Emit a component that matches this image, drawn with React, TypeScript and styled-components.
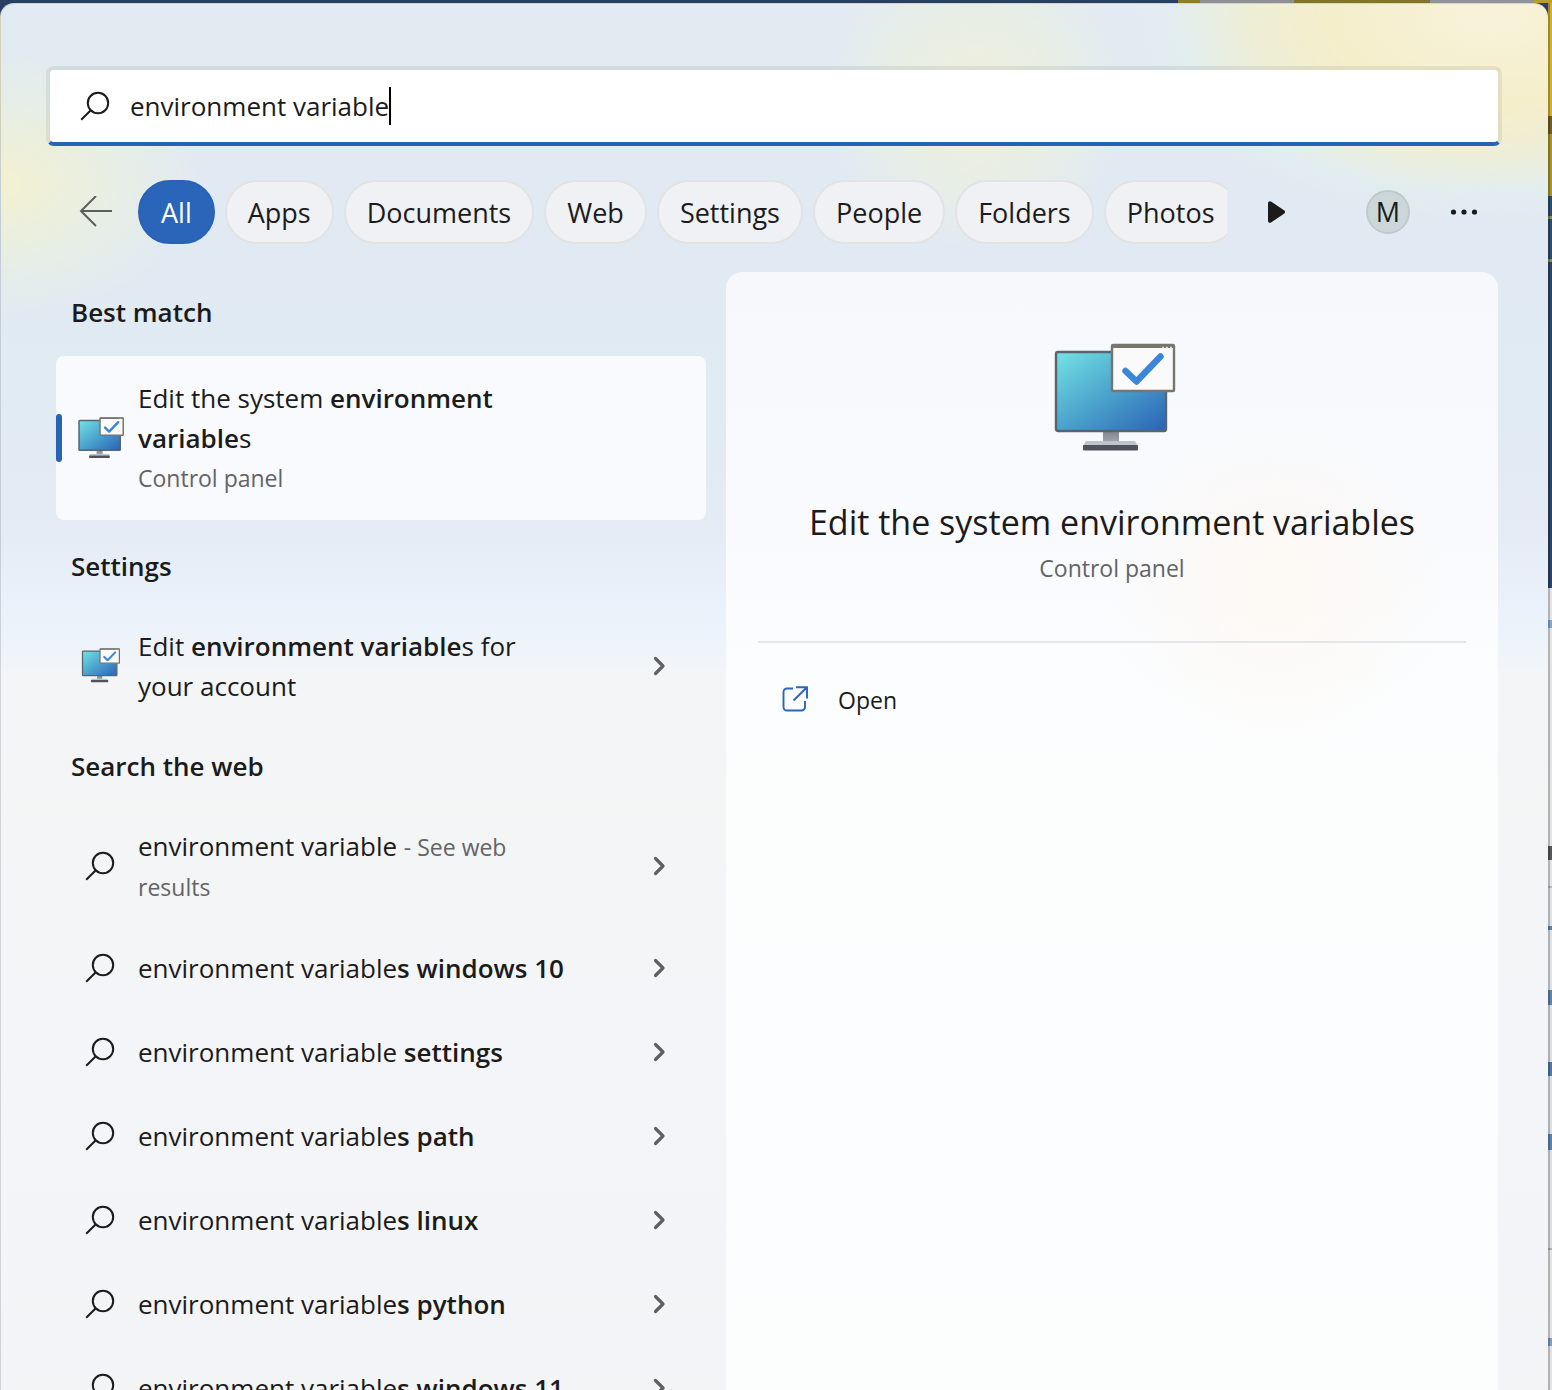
import React, { useState } from "react";
import styled, { createGlobalStyle } from "styled-components";

const GlobalStyle = createGlobalStyle`
  *, *::before, *::after { box-sizing: border-box; }
  body {
    margin: 0;
    font-family: "Segoe UI", "Open Sans", "Noto Sans", sans-serif;
    font-size: 26px;
    color: #1b1b1b;
    -webkit-font-smoothing: antialiased;
  }
  h1, h2, p, ul { margin: 0; padding: 0; }
  button, input { font: inherit; color: inherit; }
  button { border: 0; background: none; padding: 0; }
`;

const Desktop = styled.div`
  height: 100vh;
  overflow: hidden;
  padding: 3px 4px 0 0;
  background:
    linear-gradient(90deg, #27405f 0 1178px, #8f7d28 1178px 1200px, #8e9094 1200px 1294px, #84732a 1294px 1430px, #90939a 1430px 1534px, #b89f2c 1534px) top / 100% 3px no-repeat,
    linear-gradient(90deg, rgba(0, 0, 0, 0.22) 50%, transparent 50%) right / 4px 100% no-repeat,
    linear-gradient(180deg, #d0b030 0 116px, #6b5f24 116px 134px, #a8932f 134px 196px, #2c4c70 196px 216px, #8e8c56 216px 219px, #2c4c70 219px 259px, #8e8c56 259px 262px, #2a4566 262px 588px,
      #e4e4e4 588px 620px, #86a8d2 620px 628px, #e4e4e4 628px 846px, #55585c 846px 860px, #e4e4e4 860px 886px, #b8b8b8 886px 888px,
      #e0e2e6 888px 926px, #5f83ac 926px 930px, #e0e2e6 930px 990px, #5f83ac 990px 1005px, #dcdfe3 1005px 1062px, #4f78a6 1062px 1076px, #dcdfe3 1076px 1134px, #5f83ac 1134px 1150px,
      #dcdfe3 1150px 1248px, #b0b0b0 1248px 1250px, #e4e4e4 1250px 1338px, #7f9fc8 1338px 1346px, #e4e4e4 1346px) right / 4px 100% no-repeat,
    #27405f;
`;

const Window = styled.main`
  height: 100%;
  overflow: hidden;
  display: flex;
  flex-direction: column;
  padding: 62px 46px 0 45px;
  border: 1px solid rgba(130, 140, 150, 0.3);
  border-width: 1px 0 0 1px;
  border-radius: 14px 14px 0 0;
  background:
    radial-gradient(ellipse 200px 130px at 0 180px, rgba(243, 241, 206, 0.95), rgba(236, 241, 218, 0.6) 55%, rgba(222, 240, 242, 0) 100%),
    radial-gradient(ellipse 360px 205px at 1490px 10px, #f8f2da 0, #f5eecb 45%, rgba(240, 239, 208, 0.8) 68%, rgba(226, 241, 236, 0.4) 88%, rgba(224, 240, 241, 0) 100%),
    radial-gradient(ellipse 150px 150px at 975px 95px, rgba(241, 239, 218, 0.95), rgba(236, 240, 222, 0.65) 55%, rgba(224, 238, 242, 0) 100%),
    linear-gradient(180deg, #e2ebf1 0, #e1eaf3 260px, #e0ebf3 400px, #e4ebf4 520px, #eaf2fb 612px, #f3f5f7 670px, #f4f5f5 800px, #f3f5f8 1050px, #f3f4f6 100%);
`;

const SearchBox = styled.label`
  flex: none;
  display: flex;
  align-items: center;
  height: 80px;
  padding: 0 28px 0 30px;
  border: 4px solid rgba(70, 90, 80, 0.1);
  border-bottom-color: #2863b8;
  border-radius: 8px;
  background: #fff padding-box;
`;

const SearchInput = styled.input`
  field-sizing: content;
  height: 40px;
  margin-left: 20px;
  padding: 0;
  border: 0;
  outline: 0;
  background: none;
  caret-color: transparent;
`;

const Caret = styled.span`
  width: 2px;
  height: 38px;
  background: #000;
`;

const FilterRow = styled.nav`
  flex: none;
  display: flex;
  align-items: center;
  margin-top: 34px;
  padding: 0 24px 0 33px;
`;

const IconButton = styled.button`
  flex: none;
  display: grid;
  place-items: center;
  height: 44px;
`;

const Chips = styled.div`
  flex: 1;
  min-width: 0;
  display: flex;
  gap: 10px;
  margin-left: 25px;
  overflow: hidden;
`;

const Chip = styled.button<{ $active?: boolean }>`
  flex: none;
  height: 64px;
  padding: 0 21px;
  border-radius: 32px;
  border: 2px solid ${(p) => (p.$active ? "#2863b8" : "#e1e3e5")};
  background: ${(p) => (p.$active ? "#2a65ba" : "#eff1f4")};
  color: ${(p) => (p.$active ? "#fff" : "#1b1b1b")};
  font-size: 27px;
`;

const RowTools = styled.div`
  flex: none;
  display: flex;
  align-items: center;
  margin-left: 40px;
`;

const Avatar = styled.button`
  width: 44px;
  height: 44px;
  margin: 0 40px 0 79px;
  border: 2px solid #bfcacd;
  border-radius: 50%;
  background: #ccd7da;
  font-size: 27px;
  line-height: 40px;
`;

const Content = styled.div`
  flex: 1;
  min-height: 0;
  display: grid;
  grid-template-columns: 650fr 772fr;
  gap: 20px;
  margin-top: 28px;
  padding: 0 4px 0 10px;
`;

const Results = styled.div`
  min-width: 0;
  overflow: hidden;
`;

const GroupTitle = styled.h2`
  padding-left: 15px;
  font-size: 26px;
  line-height: 80px;
  font-weight: 600;
`;

const ResultRow = styled.button<{ $selected?: boolean }>`
  position: relative;
  display: flex;
  align-items: center;
  width: 100%;
  min-height: 84px;
  padding: ${(p) => (p.$selected ? 22 : 20)}px 0 ${(p) => (p.$selected ? 22 : 20)}px 20px;
  margin: ${(p) => (p.$selected ? "4px 0 6px" : "0")};
  border-radius: 8px;
  background: ${(p) => (p.$selected ? "#f8fafd" : "transparent")};
  text-align: left;
  line-height: 40px;
`;

const SelectedMark = styled.span`
  position: absolute;
  left: 0;
  top: 50%;
  width: 6px;
  height: 48px;
  margin-top: -24px;
  border-radius: 3px;
  background: #2863b8;
`;

const IconSlot = styled.span`
  flex: none;
  display: grid;
  place-items: center;
  width: 48px;
  margin-right: 14px;
`;

const ResultText = styled.span`
  flex: 1;
  padding-right: 44px;
  b { font-weight: 600; }
`;

const Muted = styled.span<{ $block?: boolean }>`
  display: ${(p) => (p.$block ? "block" : "inline")};
  font-size: 23px;
  line-height: ${(p) => (p.$block ? "40px" : "30px")};
  color: #636466;
`;

const ChevronSlot = styled.span`
  flex: none;
  display: grid;
  place-items: center;
  width: 94px;
`;

const Preview = styled.section`
  display: flex;
  flex-direction: column;
  align-items: stretch;
  padding: 71px 32px 0;
  border-radius: 16px 16px 0 0;
  background:
    radial-gradient(ellipse 170px 170px at 550px 310px, rgba(255, 247, 238, 0.65), rgba(255, 249, 242, 0) 100%),
    linear-gradient(180deg, #f6f8fb 0, #f9fafd 250px, #fbfcfe 370px, #fcfdfd 500px, #fcfdfe 900px, #fcfdfd 100%);
`;

const PreviewHead = styled.header`
  display: flex;
  flex-direction: column;
  align-items: center;
  padding-bottom: 51px;
  border-bottom: 2px solid #e5e6e8;
`;

const PreviewTitle = styled.h1`
  margin-top: 41px;
  font-size: 34px;
  line-height: 48px;
  font-weight: 400;
`;

const PreviewKind = styled.p`
  font-size: 23px;
  line-height: 44px;
  color: #636466;
`;

const ActionRow = styled.button`
  display: flex;
  align-items: center;
  gap: 28px;
  height: 80px;
  margin-top: 17px;
  padding-left: 24px;
  font-size: 23px;
`;

const SearchIcon = () => (
  <svg width="30" height="30" viewBox="0 0 30 30" fill="none" stroke="#1b1b1b" strokeWidth="2" aria-hidden="true">
    <circle cx="18" cy="12" r="10.2" />
    <path d="M10.8 19.2 1.2 28.8" />
  </svg>
);

const Chevron = () => (
  <svg width="14" height="20" viewBox="0 0 14 20" fill="none" stroke="#5f6062" strokeWidth="3.2" strokeLinecap="round" strokeLinejoin="round" aria-hidden="true">
    <path d="M3.500 2.500 11 10 3.500 17.500" />
  </svg>
);

const MonitorIcon = ({ id, width }: { id: string; width: number }) => {
  const outline = width < 60 ? 4 : 2.4;
  return (
    <svg width={width} height={Math.round((width * 114) / 128)} viewBox="-6 0 128 114" aria-hidden="true">
      <defs>
        <linearGradient id={`${id}-screen`} x1="0" y1="0" x2="1" y2="1">
          <stop offset="0" stopColor="#74e3e4" />
          <stop offset="0.5" stopColor="#4ba3cd" />
          <stop offset="1" stopColor="#2a62b6" />
        </linearGradient>
        <linearGradient id={`${id}-stand`} x1="0" y1="0" x2="0" y2="1">
          <stop offset="0" stopColor="#80858c" />
          <stop offset="1" stopColor="#a5abb3" />
        </linearGradient>
      </defs>
      <rect x="49" y="88" width="16" height="13" fill={`url(#${id}-stand)`} />
      <path d="M32 98h49l3 5H29z" fill="#bcc5cc" />
      <rect x="29" y="102" width="55" height={outline + 3} rx="1" fill="#50545a" />
      <rect x="2" y="9" width="110" height="79" rx="2" fill={`url(#${id}-screen)`} stroke="#566570" strokeWidth={outline} />
      <rect x="58" y="2" width="62" height="46" rx="1" fill="#fafafa" stroke="#77756f" strokeWidth={outline} />
      <path d="M58 3h62" stroke="#77756f" strokeWidth="4" />
      <path d="M108 4.500h2M112 4.500h2M116 4.500h2" stroke="#d6d6d4" strokeWidth="1.500" />
      <path d="m71.500 28 11 10.500 24-25" fill="none" stroke="#3b86d8" strokeWidth="6.500" strokeLinecap="round" strokeLinejoin="round" />
    </svg>
  );
};

const BackIcon = () => (
  <svg width="34" height="32" viewBox="0 0 34 32" fill="none" stroke="#5c5f5c" strokeWidth="2" aria-hidden="true">
    <path d="M33 15H2M17 0 2 15l15 15" />
  </svg>
);

const PlayIcon = () => (
  <svg width="20" height="24" viewBox="0 0 20 24" fill="#1b1b1b" aria-hidden="true">
    <path d="M1 3.200C1 1.200 3 .6 4.400 1.700L17 10.300c1.500 1.100 1.500 2.300 0 3.400L4.400 22.300C3 23.400 1 22.800 1 20.800z" />
  </svg>
);

const MoreIcon = () => (
  <svg width="28" height="6" viewBox="0 0 28 6" fill="#1b1b1b" aria-hidden="true">
    <circle cx="3.500" cy="3" r="2.600" />
    <circle cx="14" cy="3" r="2.600" />
    <circle cx="24.500" cy="3" r="2.600" />
  </svg>
);

const OpenIcon = () => (
  <svg width="28" height="28" viewBox="1 2 28 28" fill="none" stroke="#2a65ba" strokeWidth="1.900" aria-hidden="true">
    <path d="M12 4.500H6A3.500 3.500 0 0 0 2.500 8v15A3.500 3.500 0 0 0 6 26.500h14.500A3.500 3.500 0 0 0 24 23v-6" />
    <path d="M15 3.200h11v11.300M26 3.200 12.500 16.500" />
  </svg>
);

const filters = ["All", "Apps", "Documents", "Web", "Settings", "People", "Folders", "Photos"];

const webResults = [
  { typed: "environment variable", rest: "s windows 10" },
  { typed: "environment variable ", rest: "settings" },
  { typed: "environment variable", rest: "s path" },
  { typed: "environment variable", rest: "s linux" },
  { typed: "environment variable", rest: "s python" },
  { typed: "environment variable", rest: "s windows 11" },
];

export default function App() {
  const [query, setQuery] = useState("environment variable");
  const [filter, setFilter] = useState("All");

  return (
    <Desktop>
      <GlobalStyle />
      <Window>
        <SearchBox>
          <SearchIcon />
          <SearchInput aria-label="Search" value={query} onChange={(e) => setQuery(e.target.value)} />
          <Caret />
        </SearchBox>

        <FilterRow>
          <IconButton aria-label="Back"><BackIcon /></IconButton>
          <Chips>
            {filters.map((name) => (
              <Chip key={name} $active={name === filter} onClick={() => setFilter(name)}>{name}</Chip>
            ))}
          </Chips>
          <RowTools>
            <IconButton aria-label="More filters"><PlayIcon /></IconButton>
            <Avatar>M</Avatar>
            <IconButton aria-label="Options"><MoreIcon /></IconButton>
          </RowTools>
        </FilterRow>

        <Content>
          <Results>
            <GroupTitle>Best match</GroupTitle>
            <ResultRow $selected>
              <SelectedMark />
              <IconSlot><MonitorIcon id="best" width={48} /></IconSlot>
              <ResultText>
                Edit the system <b>environment variable</b>s
                <Muted $block>Control panel</Muted>
              </ResultText>
              <ChevronSlot />
            </ResultRow>

            <GroupTitle>Settings</GroupTitle>
            <ResultRow>
              <IconSlot><MonitorIcon id="account" width={40} /></IconSlot>
              <ResultText>Edit <b>environment variable</b>s for your account</ResultText>
              <ChevronSlot><Chevron /></ChevronSlot>
            </ResultRow>

            <GroupTitle>Search the web</GroupTitle>
            <ResultRow>
              <IconSlot><SearchIcon /></IconSlot>
              <ResultText>environment variable <Muted>- See web results</Muted></ResultText>
              <ChevronSlot><Chevron /></ChevronSlot>
            </ResultRow>
            {webResults.map((r) => (
              <ResultRow key={r.rest}>
                <IconSlot><SearchIcon /></IconSlot>
                <ResultText>{r.typed}<b>{r.rest}</b></ResultText>
                <ChevronSlot><Chevron /></ChevronSlot>
              </ResultRow>
            ))}
          </Results>

          <Preview>
            <PreviewHead>
              <MonitorIcon id="preview" width={128} />
              <PreviewTitle>Edit the system environment variables</PreviewTitle>
              <PreviewKind>Control panel</PreviewKind>
            </PreviewHead>
            <ActionRow><OpenIcon />Open</ActionRow>
          </Preview>
        </Content>
      </Window>
    </Desktop>
  );
}
